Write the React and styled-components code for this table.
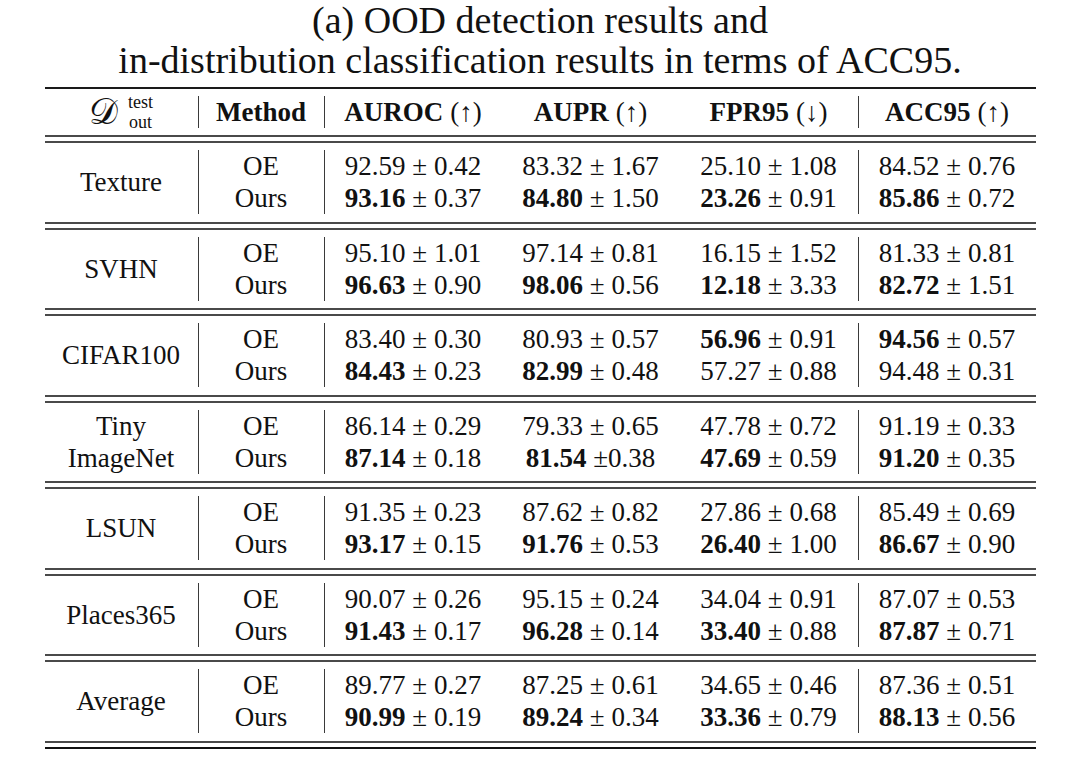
import React from 'react';
import styled, {createGlobalStyle} from 'styled-components';

const GlobalStyle = createGlobalStyle`
  body {
    margin: 0;
    background: #ffffff;
    color: #111111;
    font-family: 'Liberation Serif', 'Times New Roman', serif;
  }
`;

const Page = styled.div`
  width: 991px;
  margin: 0 auto;
`;

const Caption = styled.div`
  font-size: 38px;
  line-height: 40px;
  text-align: center;
  white-space: nowrap;
  margin: 0 -40px 7px;
`;

const Rule = styled.div`
  height: 2px;
  background: #1a1a1a;
`;

const DoubleRule = styled.div`
  height: 4px;
  border-top: 2px solid #4a4a4a;
  border-bottom: 2px solid ${p => (p.$last ? '#111' : '#4a4a4a')};
`;

const Grid = styled.div`
  display: grid;
  grid-template-columns: 153px 126px repeat(4, 178px);
  grid-auto-rows: 32px;
  padding: ${p => (p.$head ? '7px 0' : '7px 0 7.5px')};
  font-size: 27px;
  line-height: 32px;
`;

const Cell = styled.div`
  display: flex;
  align-items: center;
  justify-content: center;
  white-space: nowrap;
  font-weight: ${p => (p.$bold ? 700 : 400)};
  border-left: ${p => (p.$divider ? '1.5px solid #3a3a3a' : 'none')};
`;

const NameCell = styled.div`
  grid-row: span 2;
  display: flex;
  flex-direction: column;
  align-items: center;
  justify-content: center;
  text-align: center;
`;

const Arrow = styled.span`
  font-weight: 400;
  margin-left: 7px;
`;

const MathD = styled.span`
  font-size: 36px;
  line-height: 32px;
  margin-right: 10px;
`;

const Scripts = styled.span`
  display: inline-flex;
  flex-direction: column;
  align-items: center;
  font-size: 18px;
  line-height: 20px;
`;

const data = [
    {name: ['Texture'], oe: ['92.59 ± 0.42', '83.32 ± 1.67', '25.10 ± 1.08', '84.52 ± 0.76'],
        ours: ['*93.16 ± 0.37', '*84.80 ± 1.50', '*23.26 ± 0.91', '*85.86 ± 0.72']},
    {name: ['SVHN'], oe: ['95.10 ± 1.01', '97.14 ± 0.81', '16.15 ± 1.52', '81.33 ± 0.81'],
        ours: ['*96.63 ± 0.90', '*98.06 ± 0.56', '*12.18 ± 3.33', '*82.72 ± 1.51']},
    {name: ['CIFAR100'], oe: ['83.40 ± 0.30', '80.93 ± 0.57', '*56.96 ± 0.91', '*94.56 ± 0.57'],
        ours: ['*84.43 ± 0.23', '*82.99 ± 0.48', '57.27 ± 0.88', '94.48 ± 0.31']},
    {name: ['Tiny', 'ImageNet'], oe: ['86.14 ± 0.29', '79.33 ± 0.65', '47.78 ± 0.72', '91.19 ± 0.33'],
        ours: ['*87.14 ± 0.18', '*81.54 ±0.38', '*47.69 ± 0.59', '*91.20 ± 0.35']},
    {name: ['LSUN'], oe: ['91.35 ± 0.23', '87.62 ± 0.82', '27.86 ± 0.68', '85.49 ± 0.69'],
        ours: ['*93.17 ± 0.15', '*91.76 ± 0.53', '*26.40 ± 1.00', '*86.67 ± 0.90']},
    {name: ['Places365'], oe: ['90.07 ± 0.26', '95.15 ± 0.24', '34.04 ± 0.91', '87.07 ± 0.53'],
        ours: ['*91.43 ± 0.17', '*96.28 ± 0.14', '*33.40 ± 0.88', '*87.87 ± 0.71']},
    {name: ['Average'], oe: ['89.77 ± 0.27', '87.25 ± 0.61', '34.65 ± 0.46', '87.36 ± 0.51'],
        ours: ['*90.99 ± 0.19', '*89.24 ± 0.34', '*33.36 ± 0.79', '*88.13 ± 0.56']},
];

// a leading * marks the mean as bold (best result)
const Value = ({text, divider}) => {
    const bold = text.startsWith('*');
    const s = bold ? text.slice(1) : text;
    const cut = s.indexOf(' ');
    return (
        <Cell $divider={divider}>
            {bold ? <b>{s.slice(0, cut)}</b> : s.slice(0, cut)}
            {'\u00a0' + s.slice(cut + 1).replace(/ /g, '\u00a0')}
        </Cell>
    );
};

const Row = ({label, values}) => (
    <>
        <Cell $divider>{label}</Cell>
        {values.map((v, i) => (
            <Value key={i} text={v} divider={i === 0 || i === 3}/>
        ))}
    </>
);

export default function App() {
    return (
        <Page>
            <GlobalStyle/>
            <Caption>
                (a) OOD detection results and<br/>
                in-distribution classification results in terms of ACC95.
            </Caption>
            <Rule/>
            <Grid $head>
                <Cell>
                    <MathD>𝒟</MathD>
                    <Scripts><span>test</span><span>out</span></Scripts>
                </Cell>
                <Cell $divider $bold>Method</Cell>
                <Cell $divider $bold>AUROC<Arrow>(↑)</Arrow></Cell>
                <Cell $bold>AUPR<Arrow>(↑)</Arrow></Cell>
                <Cell $bold>FPR95<Arrow>(↓)</Arrow></Cell>
                <Cell $divider $bold>ACC95<Arrow>(↑)</Arrow></Cell>
            </Grid>
            {data.map(d => (
                <React.Fragment key={d.name.join(' ')}>
                    <DoubleRule/>
                    <Grid>
                        <NameCell>
                            {d.name.map(n => <div key={n}>{n}</div>)}
                        </NameCell>
                        <Row label="OE" values={d.oe}/>
                        <Row label="Ours" values={d.ours}/>
                    </Grid>
                </React.Fragment>
            ))}
            <DoubleRule $last/>
        </Page>
    );
}
